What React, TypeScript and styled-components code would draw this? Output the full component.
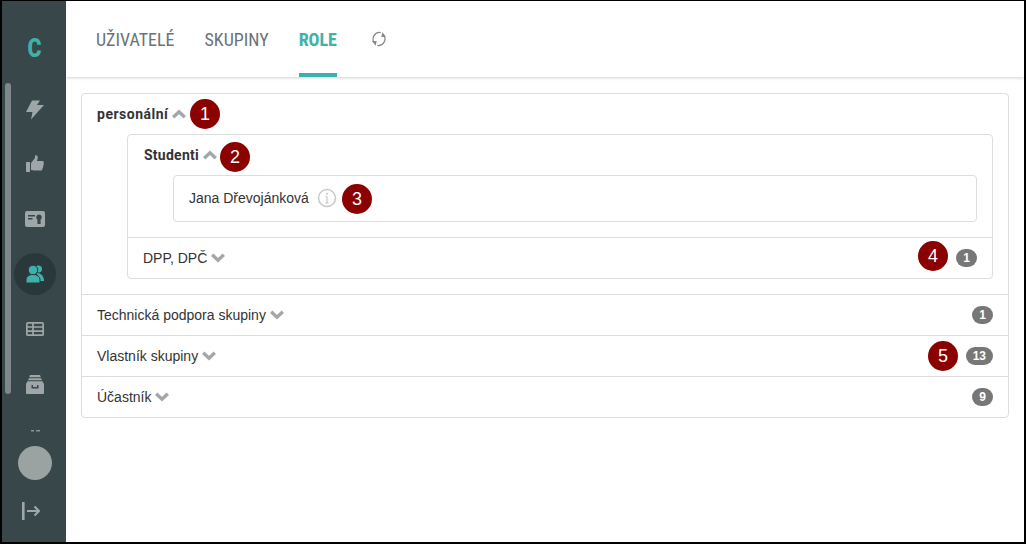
import React from "react";
import styled, { createGlobalStyle } from "styled-components";

const Global = createGlobalStyle`
  html, body { margin: 0; padding: 0; background: #fff; }
  #root { width: 1026px; height: 544px; overflow: hidden; }
  * { box-sizing: border-box; }
`;

const Frame = styled.div`
  position: relative;
  width: 1026px;
  height: 544px;
  border: 2px solid #000;
  border-top-width: 1px;
  display: flex;
  background: #fff;
  font-family: "Liberation Sans", Arial, sans-serif;
  color: #333;
  overflow: hidden;
`;

const Sidebar = styled.aside`
  position: relative;
  width: 64px;
  flex: none;
  background: #37474a;
  display: flex;
  flex-direction: column;
  align-items: center;
  padding-left: 2px;
`;

const Scrollbar = styled.div`
  position: absolute;
  left: 3px;
  top: 82px;
  width: 6px;
  height: 311px;
  border-radius: 3px;
  background: #7c888a;
`;

const Logo = styled.div`
  height: 34px;
  margin-top: 30px;
  font: 900 26px/34px Roboto, sans-serif;
  color: #3eb2aa;
  transform: scaleX(0.82);
`;

const Menu = styled.nav`
  height: 367px;
  overflow: hidden;
  display: flex;
  flex-direction: column;
  align-items: center;
  padding-top: 23px;
`;

const MenuItem = styled.div<{ $active?: boolean }>`
  flex: none;
  width: 42px;
  height: 42px;
  margin-bottom: 13px;
  border-radius: 50%;
  display: flex;
  align-items: center;
  justify-content: center;
  background: ${(p) => (p.$active ? "#2a383b" : "transparent")};
  color: ${(p) => (p.$active ? "#3eb2aa" : "#9ea6a7")};
`;

const Avatar = styled.div`
  width: 34px;
  height: 34px;
  margin-top: 14px;
  border-radius: 50%;
  background: #9aa2a2;
`;

const Logout = styled.div`
  margin-top: 22px;
  margin-right: 8px;
  color: #9ea6a7;
  display: flex;
`;

const Main = styled.main`
  flex: 1;
  min-width: 0;
  display: flex;
  flex-direction: column;
`;

const TopBar = styled.header`
  height: 76px;
  flex: none;
  display: flex;
  align-items: stretch;
  padding-left: 30px;
  gap: 30px;
  box-shadow: 0 1px 3px rgba(0, 0, 0, 0.18);
`;

const Tab = styled.div<{ $active?: boolean }>`
  display: flex;
  align-items: center;
  font-family: Roboto, sans-serif;
  font-stretch: 75%;
  font-size: 18px;
  font-weight: ${(p) => (p.$active ? 700 : 400)};
  color: ${(p) => (p.$active ? "#3eb2aa" : "#6b7378")};
  border-bottom: 4px solid ${(p) => (p.$active ? "#3eb2aa" : "transparent")};
  border-top: 4px solid transparent;
`;

const Refresh = styled.div`
  display: flex;
  align-items: center;
  color: #85898c;
  margin-left: 3px;
`;

const Content = styled.div`
  padding: 16px 15px 0;
`;

const Card = styled.div`
  border: 1px solid #ddd;
  border-radius: 4px;
`;

const Row = styled.div`
  & + & { border-top: 1px solid #ddd; }
`;

const RowHead = styled.div`
  height: 40px;
  padding: 0 15px;
  display: flex;
  align-items: center;
  font-size: 14px;
`;

const Title = styled.span<{ $inner?: boolean }>`
  font-family: Roboto, sans-serif;
  font-weight: 700;
  margin-left: ${(p) => (p.$inner ? "1px" : "0")};
  letter-spacing: ${(p) => (p.$inner ? "0.25px" : "0.5px")};
`;

const Chevron = styled.svg`
  margin-left: 4px;
  flex: none;
  color: #a3a7a9;
`;

const Badge = styled.span`
  margin-left: auto;
  min-width: 21px;
  height: 18px;
  padding: 0 7px;
  border-radius: 9px;
  background: #777;
  color: #fff;
  font-size: 12px;
  font-weight: 700;
  line-height: 18px;
  text-align: center;
`;

const Nested = styled.div`
  padding: 0 15px 15px 45px;
`;

const Person = styled.div`
  height: 47px;
  border: 1px solid #ddd;
  border-radius: 4px;
  padding: 0 15px 1px;
  display: flex;
  align-items: center;
  font-size: 14px;
`;

const InfoIcon = styled.svg`
  margin-left: 8px;
  color: #c9c9c9;
`;

const ThumbSvg = styled.svg`
  margin-bottom: 2px;
`;

const Marker = styled.div<{ $x: number; $y: number }>`
  position: absolute;
  left: ${(p) => p.$x - 2}px;
  top: ${(p) => p.$y - 1}px;
  width: 30px;
  height: 30px;
  border-radius: 50%;
  background: #8b0000;
  color: #fff;
  font: 18px/30px "Liberation Sans", Arial, sans-serif;
  text-align: center;
`;

const Up = () => (
  <Chevron width="14" height="10" viewBox="0 0 14 10" fill="none" stroke="currentColor" strokeWidth="3.400">
    <path d="M1.200 8.300 7 2.800l5.800 5.500" />
  </Chevron>
);
const Down = () => (
  <Chevron width="14" height="10" viewBox="0 0 14 10" fill="none" stroke="currentColor" strokeWidth="3.400">
    <path d="M1.200 1.700 7 7.200l5.800-5.500" />
  </Chevron>
);

const BoltIcon = () => (
  <svg width="18" height="21" viewBox="0 0 18 21" fill="currentColor">
    <path d="M6 1.500 0 13h6.500L5 20.500 18 6h-7l3-4.500z" />
  </svg>
);

const ThumbIcon = () => (
  <ThumbSvg width="18" height="17" viewBox="0 0 18 17" fill="currentColor">
    <rect x="0" y="7" width="4" height="10" rx="0.500" />
    <path d="M5 8 9 3V.8c0-.8 2.800-.8 2.800 1.800 0 1.500-.8 2.800-.8 3.400h5.500c1.600 0 1.700 2 .9 2.600.7 1 .3 2.100-.4 2.500.4 1 0 2-.7 2.300.3 1.100-.2 2.100-1.400 2.100H8.500C7 15.500 6.500 15 5 15z" />
  </ThumbSvg>
);

const UsersIcon = () => (
  <svg width="20" height="19" viewBox="0 0 20 19" fill="currentColor">
    <circle cx="13.500" cy="4" r="3.500" />
    <path d="M12 8c4 0 7 3 7 8h-6z" />
    <circle cx="8" cy="5" r="4.800" stroke="#2a383b" strokeWidth="1" />
    <path d="M1 18v-3c0-3.500 3-5.500 7-5.500s7 2 7 5.500v3z" stroke="#2a383b" strokeWidth="1" />
  </svg>
);

const CardIcon = () => (
  <svg width="20" height="16" viewBox="0 0 20 16" fill="currentColor">
    <path fillRule="evenodd" d="M2 0h16a2 2 0 0 1 2 2v12a2 2 0 0 1-2 2H2a2 2 0 0 1-2-2V2a2 2 0 0 1 2-2zM3 4v1.500h7V4zM3 7v1.500h4.500V7zM14 3.500a2.800 2.800 0 0 0-1.600 5.100V13H15.600V8.600A2.800 2.800 0 0 0 14 3.500z" />
  </svg>
);

const TableIcon = () => (
  <svg width="18" height="14" viewBox="0 0 18 14" fill="none" stroke="currentColor" strokeWidth="1.700">
    <rect x="0.850" y="0.850" width="16.300" height="12.300" rx="1" />
    <path d="M0 5h18M0 9.200h18M7 0v14" />
  </svg>
);

const DrawerIcon = () => (
  <svg width="18" height="19" viewBox="0 0 18 19" fill="currentColor">
    <path d="M4 0h10l.8 2.300H3.200zM2.800 3.200h12.400l.7 2.100H2.100z" />
    <path fillRule="evenodd" d="M1.500 6.300h15L18 9v9a1 1 0 0 1-1 1H1a1 1 0 0 1-1-1V9zM5.500 10v3.500h7V10h-1.500v2h-4v-2z" />
  </svg>
);

const ClippedIcon = () => (
  <svg width="22" height="18" viewBox="0 0 22 18" fill="#8a9394">
    <rect x="7" y="0" width="3" height="1.500" />
    <rect x="12" y="0" width="4" height="1.500" />
  </svg>
);

const LogoutIcon = () => (
  <svg width="18" height="18" viewBox="0 0 18 18" fill="none" stroke="currentColor" strokeWidth="2.200">
    <path d="M1.300 0v18" strokeWidth="2.600" />
    <path d="M5 9h12M12.500 4.500 17 9l-4.500 4.500" />
  </svg>
);

const RefreshIcon = () => (
  <svg width="18" height="18" viewBox="0 0 16 16" fill="none" stroke="currentColor" strokeWidth="1.100">
    <path d="M9.500 2.300A5.800 5.800 0 0 0 3.900 11.500" />
    <path d="M1.800 9.800H6L5 14z" fill="currentColor" stroke="none" />
    <path d="M6.500 13.700A5.800 5.800 0 0 0 12.100 4.500" />
    <path d="M14.200 6.200H10L11 2z" fill="currentColor" stroke="none" />
  </svg>
);

const Info = () => (
  <InfoIcon width="20" height="20" viewBox="0 0 20 20" fill="none" stroke="currentColor">
    <circle cx="10" cy="10" r="8.500" strokeWidth="1.500" />
    <path d="M10 8.500V15M8.500 15h3M8.500 8.500H10" strokeWidth="1.200" />
    <circle cx="10" cy="5.800" r="1" fill="currentColor" stroke="none" />
  </InfoIcon>
);

export default function App() {
  return (
    <>
      <Global />
      <Frame>
        <Sidebar>
          <Scrollbar />
          <Logo>C</Logo>
          <Menu>
            <MenuItem><BoltIcon /></MenuItem>
            <MenuItem><ThumbIcon /></MenuItem>
            <MenuItem><CardIcon /></MenuItem>
            <MenuItem $active><UsersIcon /></MenuItem>
            <MenuItem><TableIcon /></MenuItem>
            <MenuItem><DrawerIcon /></MenuItem>
            <MenuItem><ClippedIcon /></MenuItem>
          </Menu>
          <Avatar />
          <Logout><LogoutIcon /></Logout>
        </Sidebar>
        <Main>
          <TopBar>
            <Tab>UŽIVATELÉ</Tab>
            <Tab>SKUPINY</Tab>
            <Tab $active>ROLE</Tab>
            <Refresh><RefreshIcon /></Refresh>
          </TopBar>
          <Content>
            <Card>
              <Row>
                <RowHead><Title>personální</Title><Up /></RowHead>
                <Nested>
                  <Card>
                    <Row>
                      <RowHead><Title $inner>Studenti</Title><Up /></RowHead>
                      <Nested>
                        <Person>Jana Dřevojánková<Info /></Person>
                      </Nested>
                    </Row>
                    <Row>
                      <RowHead>DPP, DPČ<Down /><Badge>1</Badge></RowHead>
                    </Row>
                  </Card>
                </Nested>
              </Row>
              <Row><RowHead>Technická podpora skupiny<Down /><Badge>1</Badge></RowHead></Row>
              <Row><RowHead>Vlastník skupiny<Down /><Badge>13</Badge></RowHead></Row>
              <Row><RowHead>Účastník<Down /><Badge>9</Badge></RowHead></Row>
            </Card>
          </Content>
        </Main>
        <Marker $x={190} $y={99}>1</Marker>
        <Marker $x={220} $y={142}>2</Marker>
        <Marker $x={342} $y={184}>3</Marker>
        <Marker $x={918} $y={241}>4</Marker>
        <Marker $x={928} $y={341}>5</Marker>
      </Frame>
    </>
  );
}
